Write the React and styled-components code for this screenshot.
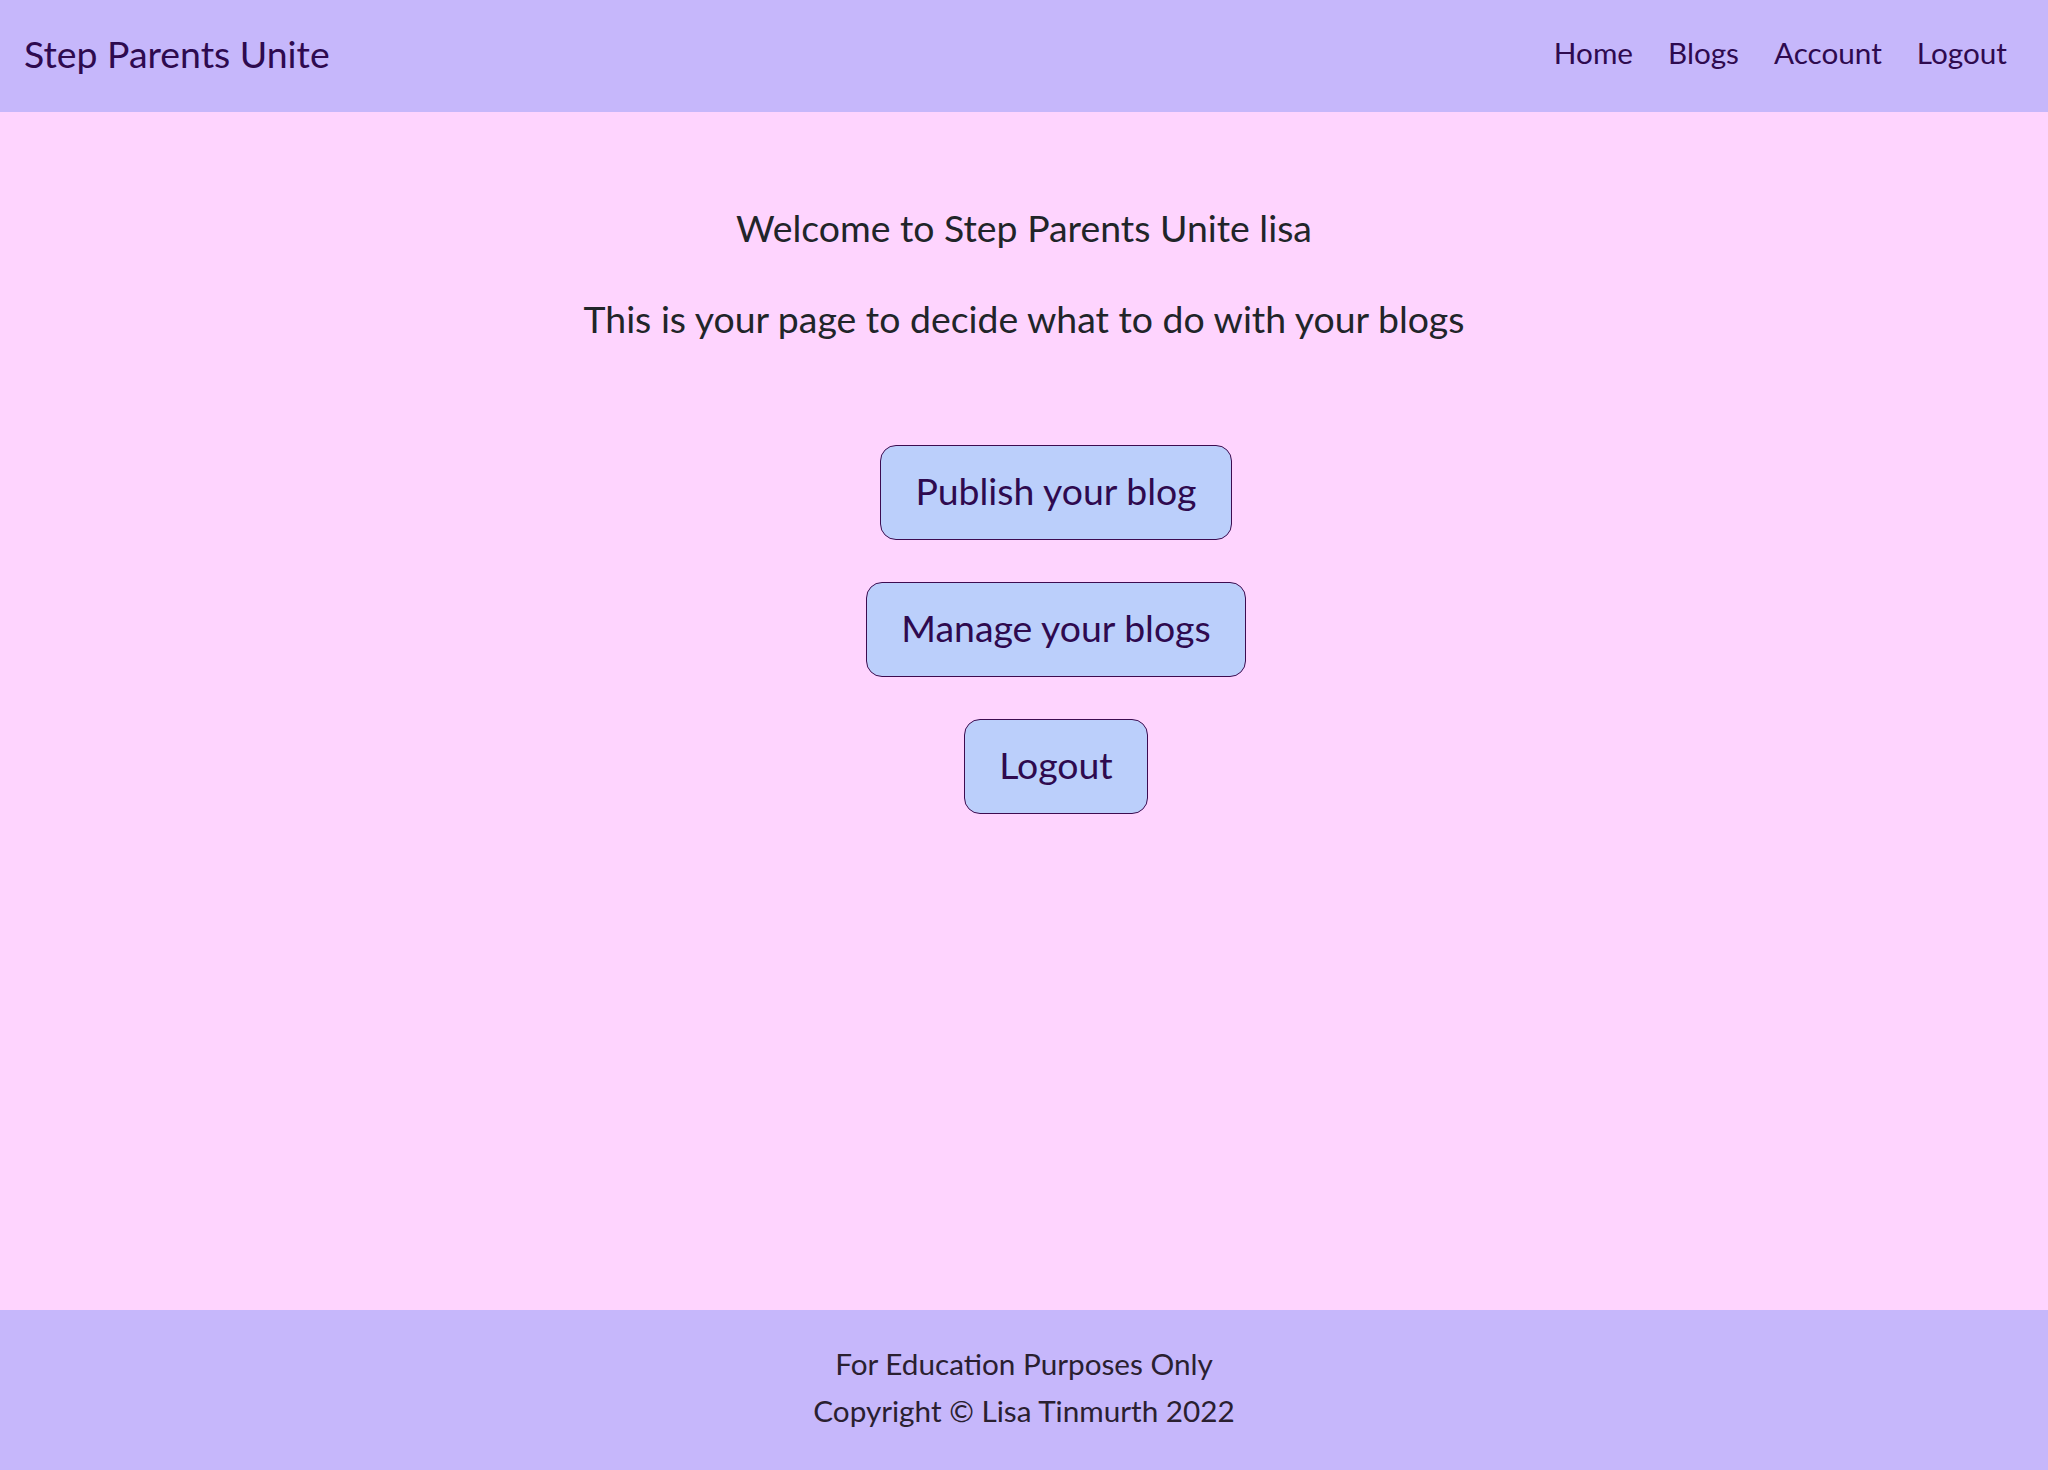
import React from "react";
import styled, { createGlobalStyle } from "styled-components";

const GlobalStyle = createGlobalStyle`
  html, body { margin: 0; padding: 0; }
  body {
    font-family: Lato, "Noto Sans", sans-serif;
    background: #fed4fe;
    color: #212529;
  }
  * { box-sizing: border-box; }
`;

const Page = styled.div`
  min-height: 100vh;
  display: flex;
  flex-direction: column;
`;

const Header = styled.header`
  height: 112px;
  background: #c6b7fb;
  display: flex;
  align-items: center;
  justify-content: space-between;
  padding: 0 41px 6px 24px;
`;

const Brand = styled.a`
  font-size: 37.4px;
  line-height: 45px;
  color: #2e0a4f;
  text-decoration: none;
`;

const Nav = styled.nav`
  display: flex;
  gap: 35px;
`;

const NavLink = styled.a`
  font-size: 29.7px;
  line-height: 36px;
  color: #2e0a4f;
  text-decoration: none;
`;

const Main = styled.main`
  flex: 1;
  display: flex;
  flex-direction: column;
  align-items: center;
  padding-top: 93px;
`;

const Intro = styled.div`
  display: flex;
  flex-direction: column;
  align-items: center;
  gap: 46px;
`;

const Lead = styled.p`
  margin: 0;
  font-size: 37.4px;
  line-height: 45px;
  color: #212529;
  text-align: center;
`;

const Actions = styled.div`
  display: flex;
  flex-direction: column;
  align-items: center;
  gap: 42px;
  margin-top: 104px;
  padding-left: 64px;
`;

const ActionButton = styled.button`
  font-family: Lato, "Noto Sans", sans-serif;
  font-size: 37.4px;
  line-height: 45px;
  color: #2e0a4f;
  background: #bbcffb;
  border: 1px solid #3d0c50;
  border-radius: 16px;
  padding: 22px 34px 26px;
  cursor: pointer;
`;

const Footer = styled.footer`
  background: #c6b7fb;
  padding: 30px 0 35px;
  display: flex;
  flex-direction: column;
  align-items: center;
`;

const FooterLine = styled.div`
  font-size: 29.7px;
  line-height: 47.7px;
  color: #2a2030;
`;

export default function App() {
  return (
    <Page>
      <GlobalStyle />
      <Header>
        <Brand href="#">Step Parents Unite</Brand>
        <Nav>
          <NavLink href="#">Home</NavLink>
          <NavLink href="#">Blogs</NavLink>
          <NavLink href="#">Account</NavLink>
          <NavLink href="#">Logout</NavLink>
        </Nav>
      </Header>
      <Main>
        <Intro>
          <Lead>Welcome to Step Parents Unite lisa</Lead>
          <Lead>This is your page to decide what to do with your blogs</Lead>
        </Intro>
        <Actions>
          <ActionButton>Publish your blog</ActionButton>
          <ActionButton>Manage your blogs</ActionButton>
          <ActionButton>Logout</ActionButton>
        </Actions>
      </Main>
      <Footer>
        <FooterLine>For Education Purposes Only</FooterLine>
        <FooterLine>Copyright © Lisa Tinmurth 2022</FooterLine>
      </Footer>
    </Page>
  );
}
